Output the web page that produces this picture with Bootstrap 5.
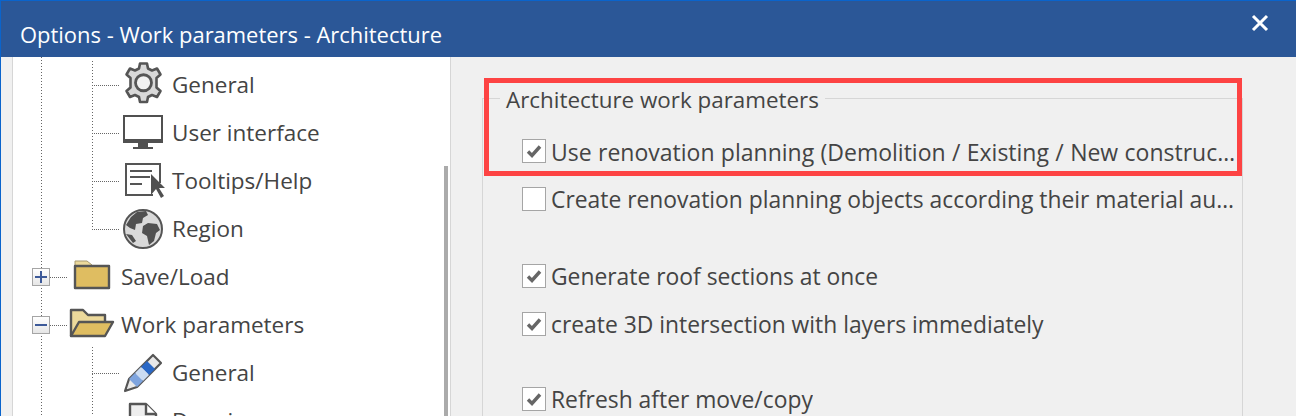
<!doctype html>
<html lang="en"><head><meta charset="utf-8">
<title>Options</title>
<link href="https://cdn.jsdelivr.net/npm/bootstrap@5.3.0/dist/css/bootstrap.min.css" rel="stylesheet">
<style>
html,body{height:416px;overflow:hidden;background:#f0f0f0}
body{font-family:"Open Sans","Noto Sans","Liberation Sans",sans-serif;font-size:22.5px;color:#444;}
.dlg{height:416px;border-top:1px solid #0a64cc;border-left:1px solid #0a64cc}
.titlebar{height:56px;background:#2b5797;color:#fff;padding:0 19px 0 19px;font-size:21.95px}
.titlebar .ttl{padding-top:19px;line-height:30px}
.xbtn{width:18px;height:18px;margin:13px 8px 0 0}
.leftstrip{width:11px;background:#f0f0f0;border-right:1px solid #d6d6d6;box-sizing:content-box;flex:none}
.treepane{width:437px;background:#fff;border-right:1px solid #d6d6d6;flex:none;box-sizing:content-box;overflow:hidden}
.treewrap{flex:1;overflow:hidden}
.vscroll{width:4px;flex:none;margin-top:109px;background:#ababab;margin-left:-6px;margin-right:2px}
.tree{--dot:repeating-linear-gradient(to bottom,#666 0 1px,transparent 1px 3px);padding-top:4px;min-height:100%;background:var(--dot) 28px 0/1px 100% no-repeat;}
.sub{margin-left:79px;background:var(--dot) 0 0/1px calc(100% - 24px) no-repeat}
.sub.open{background-size:1px 100%;margin-top:-2px;padding-top:2px}
.rw{height:48px;display:flex;align-items:center;white-space:nowrap}
.conn{width:27px;height:1px;background:repeating-linear-gradient(to right,#666 0 1px,transparent 1px 2px);flex:none}
.rw .ico{width:40px;height:40px;flex:none;margin-left:4px;margin-right:9px;overflow:visible}
.top .cell{width:35px;margin-left:19px;flex:none;display:flex;align-items:center}
.top .conn{width:17px}
.top .ico{width:40px;margin-left:5px;margin-right:9px}
.exp{width:18px;height:18px;border:1px solid #a5a5a5;background:linear-gradient(#fff,#e6e6e6);flex:none;display:flex;align-items:center;justify-content:center}
.content{flex:1;background:#f0f0f0;padding:24px 53px 0 31px;position:relative;overflow:hidden;min-width:0}
.fs{border:1px solid #d6d6d6;border-bottom:0;margin:0;padding:0 0 0 39px;min-width:0;height:400px}
.fs legend{float:none;width:auto;font-size:22.4px;line-height:30px;margin:0 0 0 -22px;padding:4px 6px 0;color:#444}
.opt{height:48px;display:flex;align-items:center;gap:5px;font-size:22.85px;margin:0;padding-right:6px}
.opt .form-check-input{width:24px;height:24px;margin:-2px 0 0;flex:none;border:1px solid #a5a5a5;border-radius:0;background-color:#fff;box-shadow:none}
.opt .form-check-input:checked{background-color:#fff;border-color:#a5a5a5;background-size:18px;background-image:url("data:image/svg+xml,%3csvg xmlns='http://www.w3.org/2000/svg' viewBox='0 0 18 18'%3e%3cpath fill='none' stroke='%23666' stroke-width='3.4' d='M3 9.5l4 4 8-9'/%3e%3c/svg%3e")}
.gapy{margin-top:29px}
.gapz{margin-top:27px}
.redbox{position:absolute;left:33px;top:21px;width:758px;height:98px;border:5px solid #fd4343;pointer-events:none}
.fs .first{margin-top:13px;font-size:23px;word-spacing:.4px;padding-right:0}
</style></head>
<body>
<div class="dlg d-flex flex-column">
  <div class="titlebar d-flex justify-content-between flex-shrink-0">
    <div class="ttl">Options - Work parameters - Architecture</div>
    <svg class="xbtn" viewBox="0 0 18 18"><path d="M2 2l14 14M16 2L2 16" stroke="#fff" stroke-width="3" fill="none"/></svg>
  </div>
  <div class="d-flex flex-grow-1" style="min-height:0">
    <div class="leftstrip"></div>
    <div class="treepane d-flex">
      <div class="treewrap">
        <div class="tree">
          <div class="sub">
            <div class="rw"><span class="conn"></span>
              <svg class="ico" viewBox="0 0 40 40"><path d="M17-1.500h7l1 5 4 2 5-2 3.500 6-4 3.500v9.500l4 3.500-3.500 6-5-2-4 2-1 5h-7l-1-5-4-2-5 2-3.500-6 4-3.500v-9.500l-4-3.500 3.500-6 5 2 4-2z" fill="#d9d9d9" stroke="#555" stroke-width="2.6" stroke-linejoin="round"/><circle cx="20.500" cy="17.750" r="8" fill="#f2f2f2" stroke="#555" stroke-width="2.800"/></svg>
              General</div>
            <div class="rw"><span class="conn"></span>
              <svg class="ico" viewBox="0 0 40 40"><rect x="1" y="3" width="38" height="25" fill="#fff" stroke="#505050" stroke-width="2"/><path d="M0 26h40v4H0zM15 30h10v4H15zM10 34h20v2H10z" fill="#505050"/></svg>
              User interface</div>
            <div class="rw"><span class="conn"></span>
              <svg class="ico" viewBox="0 0 40 40"><path d="M37 22V3H3v31h27" fill="#fff" stroke="#555" stroke-width="2"/><path d="M7 10h22M7 16h20M7 23h12" stroke="#555" stroke-width="2"/><path d="M28 13v21l5-6 5 9 3-2-5-8h6z" fill="#505050"/></svg>
              Tooltips/Help</div>
            <div class="rw"><span class="conn"></span>
              <svg class="ico" viewBox="0 0 40 40"><circle cx="20" cy="20" r="19" fill="#d9d9d9" stroke="#555" stroke-width="2"/><path d="M8 8l6-5 9-1 2 4-5 3-1 5-6 1-1 6-5-2-4-3zM20 17l5-3 9 1 3 6-4 3-2 8-5 4-2-9-5-3zM3 25l6 1 4 6-3 2z" fill="#505050"/></svg>
              Region</div>
          </div>
          <div class="rw top"><span class="cell"><span class="exp"><svg width="12" height="12" viewBox="0 0 12 12"><path d="M0 6h12M6 0v12" stroke="#3d5a99" stroke-width="2"/></svg></span><span class="conn"></span></span>
            <svg class="ico" viewBox="0 0 40 40"><path d="M3 9V4h12l5 4" fill="#ecd99b" stroke="#a89a70"/><rect x="3" y="9" width="34" height="22" fill="#dfbd61" stroke="#555" stroke-width="2.4" stroke-linejoin="round"/></svg>
            Save/Load</div>
          <div class="rw top"><span class="cell"><span class="exp"><svg width="12" height="12" viewBox="0 0 12 12"><path d="M0 6h12" stroke="#3d5a99" stroke-width="2"/></svg></span><span class="conn"></span></span>
            <svg class="ico" viewBox="0 0 40 40"><path d="M-1 31V5h12l5 5h17v7" fill="#ecd99b" stroke="#555" stroke-width="2.400" stroke-linejoin="round"/><path d="M-1 31l8-14h34l-8 14z" fill="#dfbd61" stroke="#555" stroke-width="2.400" stroke-linejoin="round"/></svg>
            Work parameters</div>
          <div class="sub open">
            <div class="rw"><span class="conn"></span>
              <svg class="ico" viewBox="0 0 40 40"><path d="M2 38l4-12L30 2l8 8-24 24z" fill="#e8e8e8" stroke="#555" stroke-width="2.200" stroke-linejoin="round"/><path d="M24 8l8 8-6 6-8-8z" fill="#2a68c6"/><path d="M18 14l8 8-6 6-8-8z" fill="#cbdcf2"/><path d="M12 20l8 8-6 6-8-8z" fill="#7ea4de"/></svg>
              General</div>
            <div class="rw"><span class="conn"></span>
              <svg class="ico" viewBox="0 0 40 40"><path d="M7 3h16l10 10v25H7z" fill="#eee" stroke="#555" stroke-width="2.400" stroke-linejoin="round"/><path d="M23 3v10h10" fill="#fff" stroke="#555" stroke-width="2.400"/></svg>
              Drawing</div>
          </div>
        </div>
      </div>
      <div class="vscroll"></div>
    </div>
    <div class="content">
      <fieldset class="fs">
        <legend>Architecture work parameters</legend>
        <label class="opt first"><input class="form-check-input" type="checkbox" checked><span class="text-truncate">Use renovation planning (Demolition / Existing / New construction)</span></label>
        <label class="opt"><input class="form-check-input" type="checkbox"><span class="text-truncate">Create renovation planning objects according their material automatically</span></label>
        <label class="opt gapy"><input class="form-check-input" type="checkbox" checked><span class="text-truncate">Generate roof sections at once</span></label>
        <label class="opt"><input class="form-check-input" type="checkbox" checked><span class="text-truncate">create 3D intersection with layers immediately</span></label>
        <label class="opt gapz"><input class="form-check-input" type="checkbox" checked><span class="text-truncate">Refresh after move/copy</span></label>
      </fieldset>
      <div class="redbox"></div>
    </div>
  </div>
</div>
</body></html>
